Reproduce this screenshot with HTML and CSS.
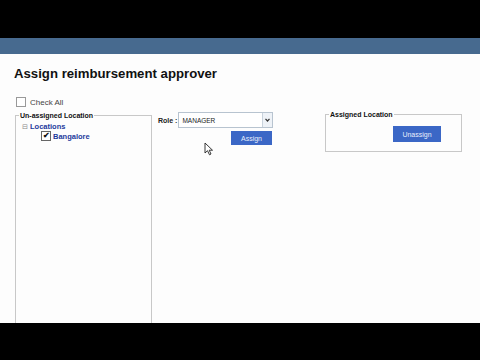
FILE: index.html
```html
<!DOCTYPE html>
<html lang="en">
<head>
    <meta charset="UTF-8">
    <title>Assign reimbursement approver</title>
    <link rel="stylesheet" href="styles.css">
</head>
<body>
    <div class="topbar"></div>
    <div class="navbar"></div>
    <main class="content">
        <h1>Assign reimbursement approver</h1>
        <div class="columns">
            <div class="left-col">
                <label class="check-all"><span class="box"></span>Check All</label>
                <fieldset class="panel unassigned">
                    <legend>Un-assigned Location</legend>
                    <div class="tree-root"><span class="toggle">&#8863;</span>Locations</div>
                    <div class="tree-item"><span class="box checked">&#10004;</span>Bangalore</div>
                </fieldset>
            </div>
            <div class="mid-col">
                <div class="role-row">
                    <span class="role-label">Role :</span>
                    <div class="select">
                        <span>MANAGER</span>
                        <span class="arrow">
                            <svg width="5" height="4" viewBox="0 0 5 4"><path d="M0.5 0.8 L2.5 3 L4.5 0.8" fill="none" stroke="#333" stroke-width="1.2"/></svg>
                        </span>
                    </div>
                </div>
                <button class="btn assign">Assign</button>
                <svg class="cursor" width="10" height="14" viewBox="0 0 10 14"><path d="M1 1 L1 11 L3.5 8.7 L5.5 12.8 L7 12 L5.2 8.2 L8.5 8.2 Z" fill="#fff" stroke="#222" stroke-width="0.9"/></svg>
            </div>
            <fieldset class="panel assigned">
                <legend>Assigned Location</legend>
                <button class="btn unassign">Unassign</button>
            </fieldset>
        </div>
    </main>
    <div class="bottombar"></div>
</body>
</html>
```

FILE: styles.css
```css
body {
    margin: 0;
    background: #000;
    font-family: 'Liberation Sans', Arial, sans-serif;
    overflow: hidden;
}

.topbar {
    height: 38px;
    background: #000;
}

.navbar {
    height: 16px;
    background: #476a8f;
}

.content {
    height: 269px;
    background: #fdfdfd;
    overflow: hidden;
    padding: 0 0 0 15px;
    box-sizing: border-box;
}

h1 {
    margin: 0 0 0 -1px;
    padding: 12px 0 0 0;
    font-size: 13.2px;
    font-weight: bold;
    color: #111;
    line-height: 15px;
}

.columns {
    display: flex;
    align-items: flex-start;
    margin-top: 16px;
}

.left-col {
    width: 137px;
}

.check-all {
    display: flex;
    align-items: center;
    gap: 4px;
    font-size: 8px;
    color: #444;
    margin-left: 1px;
}

.box {
    display: inline-block;
    width: 8px;
    height: 8px;
    border: 1px solid #999;
    background: #fff;
}

.panel {
    margin: 0;
    border: 1px solid #c8c8c8;
    padding: 0 4px;
}

.panel legend {
    font-size: 7px;
    font-weight: bold;
    color: #111;
    padding: 0 1px;
    margin-left: -1px;
}

.unassigned {
    margin-top: 5px;
    height: 240px;
    box-sizing: border-box;
}

.tree-root {
    font-size: 7.5px;
    font-weight: bold;
    color: #1d3a9c;
    margin: 3px 0 0 2px;
    display: flex;
    align-items: center;
}

.toggle {
    font-size: 7px;
    color: #888;
    margin-right: 2px;
    font-weight: normal;
}

.tree-item {
    display: flex;
    align-items: center;
    font-size: 7.5px;
    font-weight: bold;
    color: #1d3a9c;
    margin: 0 0 0 21px;
    gap: 2px;
}

.box.checked {
    font-size: 8px;
    line-height: 8px;
    color: #111;
    text-align: center;
    border-color: #666;
}

.mid-col {
    margin-left: 6px;
    margin-top: 15px;
    width: 115px;
    display: flex;
    flex-direction: column;
    align-items: flex-end;
    position: relative;
}

.role-row {
    display: flex;
    align-items: center;
    width: 100%;
}

.role-label {
    font-size: 7px;
    font-weight: bold;
    color: #222;
    white-space: nowrap;
    margin-right: 1px;
}

.select {
    flex: 1;
    height: 16px;
    border: 1px solid #b8c4d0;
    background: #fff;
    display: flex;
    align-items: center;
    justify-content: space-between;
    font-size: 6.5px;
    color: #222;
    padding-left: 3px;
    box-sizing: border-box;
}

.arrow {
    width: 9px;
    height: 14px;
    background: #eef2f7;
    border-left: 1px solid #c8d2dc;
    display: flex;
    align-items: center;
    justify-content: center;
}

.btn {
    border: none;
    background: #3b67c6;
    color: #e8eefc;
    font-family: 'Liberation Sans', Arial, sans-serif;
    font-size: 7px;
    padding: 0;
}

.assign {
    width: 41px;
    height: 14px;
    margin: 3px 1px 0 0;
}

.cursor {
    position: absolute;
    left: 46px;
    top: 30px;
}

.assigned {
    margin-left: 52px;
    margin-top: 14px;
    width: 137px;
    height: 41px;
    box-sizing: border-box;
}

.unassign {
    width: 48px;
    height: 16px;
    margin: 8px 0 0 63px;
}

.bottombar {
    height: 37px;
    background: #000;
}
```
